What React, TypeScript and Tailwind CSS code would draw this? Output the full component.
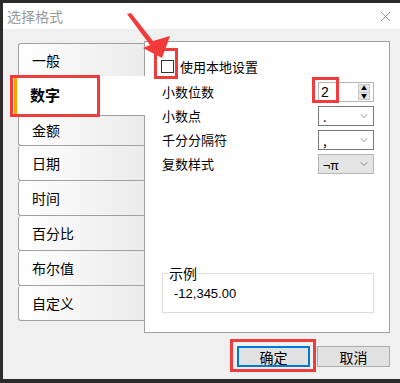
import { X, ChevronDown } from "lucide-react"

const tabs = ["一般", "数字", "金额", "日期", "时间", "百分比", "布尔值", "自定义"]

function Select({ value, gray }: { value: string; gray?: boolean }) {
    return (
        <div className={`w-[56px] h-[20px] border border-[#7a7a7a] flex items-center justify-between pl-[4px] pr-[3px] ${gray ? 'bg-[#e5e5e5] border-[#b5b5b5]' : 'bg-white'}`}>
            <span className="text-[13px] leading-none">{value}</span>
            <ChevronDown size={12} strokeWidth={1.3} className="text-[#555]" />
        </div>
    )
}

export default function App() {
    return (
        <div className="relative w-[400px] h-[383px] bg-[#2b2b2b] pt-[3px] pl-[3px] pb-[4px] flex flex-col text-black" style={{ fontFamily: '"Noto Sans CJK SC", "Liberation Sans", sans-serif' }}>
            {/* title bar */}
            <div className="h-[26px] bg-white flex items-center justify-between pl-[4px] pr-[6px]">
                <span className="text-[14px] text-[#9a9a9a]">选择格式</span>
                <X size={17} strokeWidth={1} className="text-[#777]" />
            </div>

            {/* body */}
            <div className="flex-1 bg-[#f0f0f0] flex flex-col pt-[12px] pr-[10px]">
                <div className="flex">
                    {/* tabs */}
                    <div className="w-[130px] ml-[11px] pt-[2px] flex flex-col">
                        {tabs.map((t, i) => {
                            if (i === 1) return (
                                <div key={t} className="relative z-10 h-[39px] w-[131px] -mt-[2px] bg-white border-l-[3px] border-[#ffa200] flex items-center pl-[13px] text-[15px] font-bold">{t}</div>
                            )
                            return (
                                <div key={t} className={`ml-[4px] w-[126px] border-l border-b border-[#a0a0a0] rounded-l-[3px] bg-linear-to-r from-white to-[#ebebeb] flex items-center pl-[13px] text-[14px] ${i === 0 ? 'h-[35px] border-t' : i === 2 ? 'h-[31px] border-t -mt-[0px]' : 'h-[35px]'}`}>{t}</div>
                            )
                        })}
                    </div>

                    {/* panel */}
                    <div className="w-[249px] h-[292px] bg-white border border-[#a0a0a0] flex flex-col pl-[16px] pr-[15px] pt-[18px] pb-[19px] text-[13px]">
                        <div className="flex items-center h-[13px] gap-[6px]">
                            <div className="w-[13px] h-[13px] border border-[#333] bg-white"></div>
                            <span>使用本地设置</span>
                        </div>
                        <div className="flex flex-col gap-[4px] mt-[9px] pl-[1px]">
                            <div className="flex items-center justify-between h-[20px]">
                                <span>小数位数</span>
                                <div className="w-[56px] h-[20px] border border-[#b4b4b4] bg-white flex items-center justify-between pl-[2px] pr-[3px]">
                                    <span className="text-[14px] leading-none" style={{ fontFamily: '"Liberation Sans", sans-serif' }}>2</span>
                                    <div className="w-[12px] h-[16px] flex flex-col border border-[#c8c8c8] bg-[#e6e6e6]">
                                        <div className="flex-1 flex items-center justify-center text-[6px] leading-none border-b border-[#c8c8c8]">▲</div>
                                        <div className="flex-1 flex items-center justify-center text-[6px] leading-none">▼</div>
                                    </div>
                                </div>
                            </div>
                            <div className="flex items-center justify-between h-[20px]">
                                <span>小数点</span>
                                <Select value="." />
                            </div>
                            <div className="flex items-center justify-between h-[20px]">
                                <span>千分分隔符</span>
                                <Select value="," />
                            </div>
                            <div className="flex items-center justify-between h-[20px]">
                                <span>复数样式</span>
                                <Select value="¬π" gray />
                            </div>
                        </div>

                        <div className="relative mt-auto ml-[1px] h-[40px] border border-[#dcdcdc] flex items-center pl-[11px]">
                            <span className="absolute -top-[10px] left-[5px] bg-white px-[1px] text-[14px] leading-[18px]">示例</span>
                            <span className="text-[13px] mt-[2px]" style={{ fontFamily: '"Liberation Sans", sans-serif' }}>-12,345.00</span>
                        </div>
                    </div>
                </div>

                {/* buttons */}
                <div className="flex justify-end gap-[7px] mt-[13px]">
                    <button className="w-[73px] h-[21px] bg-[#e1e1e1] border-2 border-[#0078d7] text-[14px] leading-none">确定</button>
                    <button className="w-[73px] h-[21px] bg-[#e1e1e1] border border-[#adadad] text-[14px] leading-none">取消</button>
                </div>
            </div>

            {/* annotations */}
            <div className="absolute left-[10px] top-[75px] w-[90px] h-[42px] border-[3px] border-[#f03c3c] z-20"></div>
            <div className="absolute left-[154px] top-[48px] w-[24px] h-[31px] border-[3px] border-[#f03c3c] z-20"></div>
            <div className="absolute left-[312px] top-[77px] w-[27px] h-[26px] border-[3px] border-[#f03c3c] z-20"></div>
            <div className="absolute left-[230px] top-[339px] w-[86px] h-[33px] border-[3px] border-[#f03c3c] z-20"></div>
            <svg className="absolute left-0 top-0 z-30 pointer-events-none" width="400" height="383">
                <polygon points="127,14 131,13 153,41 170,36 162,58 143,48 150,45" fill="#f23a3a" />
            </svg>
        </div>
    )
}
